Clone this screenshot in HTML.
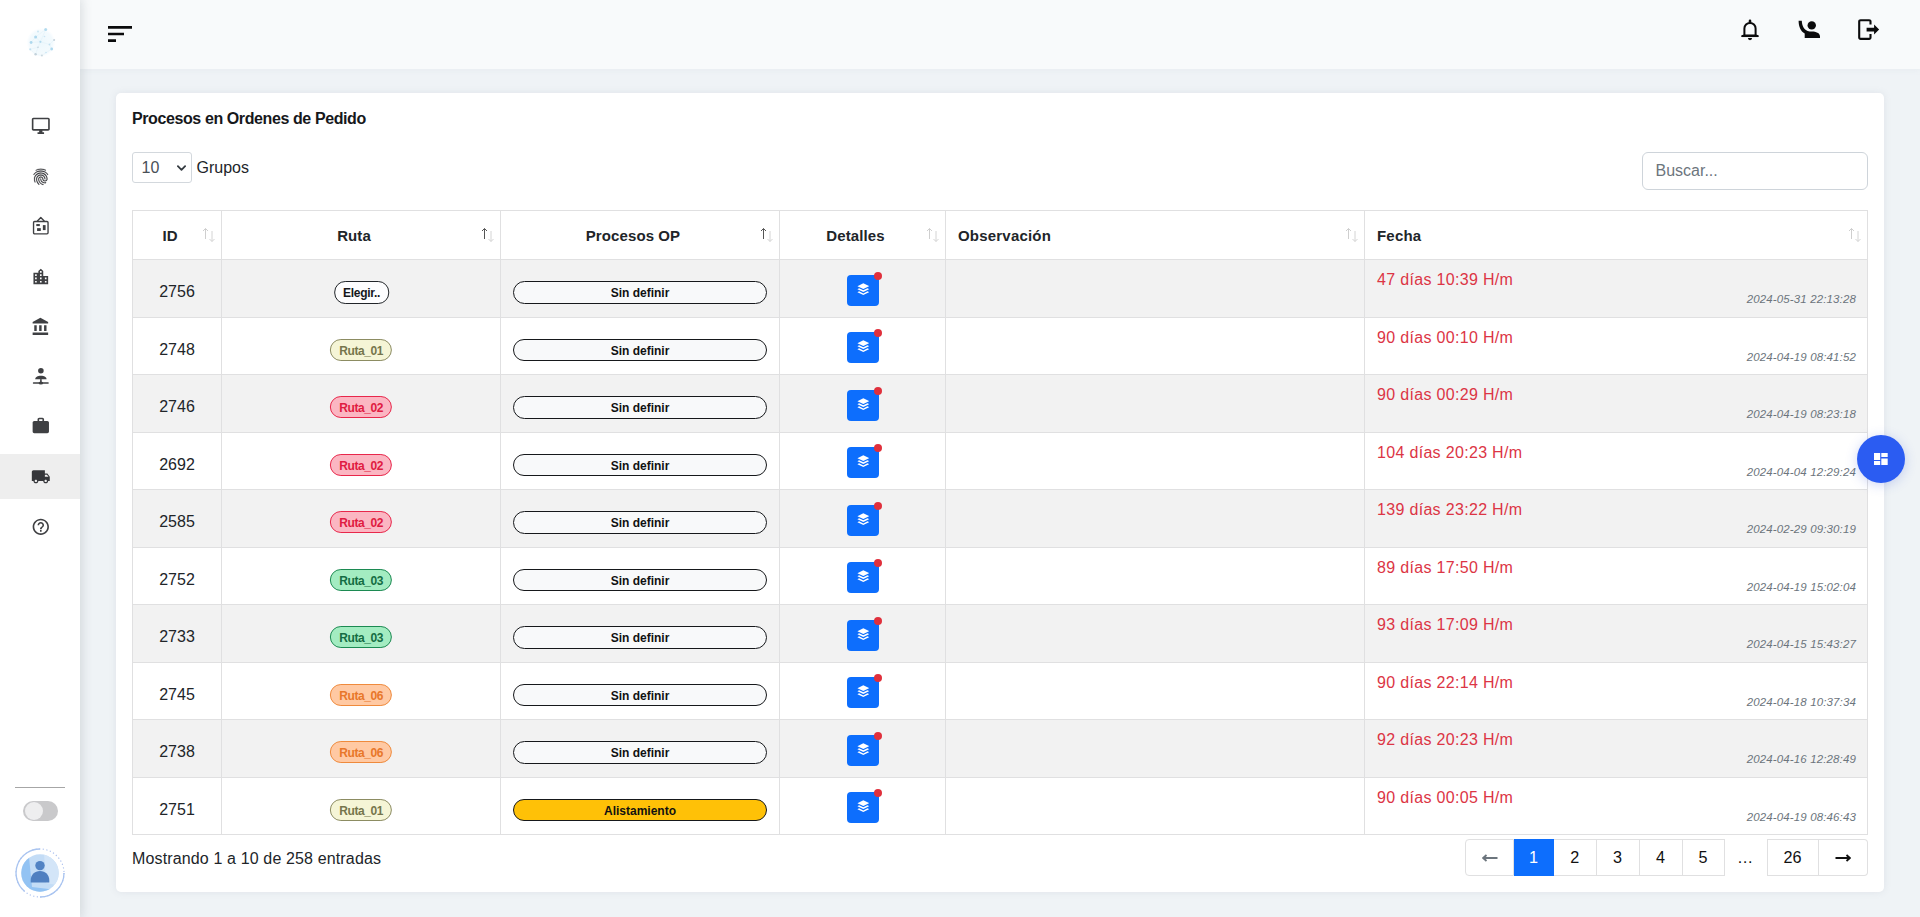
<!DOCTYPE html>
<html lang="es">
<head>
<meta charset="utf-8">
<title>Procesos en Ordenes de Pedido</title>
<style>
*{box-sizing:border-box;margin:0;padding:0}
html,body{width:1920px;height:917px;overflow:hidden}
body{position:relative;background:#eff3f6;font-family:"Liberation Sans",sans-serif;font-size:16px;color:#212529}
.sidebar{position:absolute;left:0;top:0;width:80px;height:917px;background:#fff;box-shadow:0 0 10px 2px rgba(60,72,90,.16);z-index:5}
.sidebar svg.ic{position:absolute;left:31.200px;width:19.600px;height:19.600px;fill:#3f4043;margin-top:.3px}
.sidebar .active{position:absolute;left:0;top:454px;width:80px;height:44.500px;background:#eee}
.sidebar .hr{position:absolute;left:15px;top:786.500px;width:50px;height:1px;background:#a6a6a6}
.sidebar .tog{position:absolute;left:23px;top:801px;width:35px;height:20px;border-radius:10px;background:#c9c9cb}
.sidebar .tog i{position:absolute;left:1.500px;top:1px;width:18px;height:18px;border-radius:50%;background:#eeeeef}
.sidebar .logo{position:absolute;left:25px;top:26px;width:32px;height:32px}
.sidebar .ava{position:absolute;left:14px;top:847px;width:52px;height:52px}
.topbar{position:absolute;left:80px;top:0;width:1840px;height:69px;background:#f8fafb;box-shadow:0 2px 6px rgba(120,135,155,.05)}
.topbar svg{position:absolute}
.card{position:absolute;left:116px;top:93px;width:1768px;height:799px;background:#fff;border-radius:5px;box-shadow:0 0 7px rgba(140,152,170,.16)}
.title{position:absolute;left:16px;top:16px;font-size:16px;font-weight:700;line-height:20px;letter-spacing:-.4px;color:#16181b;white-space:nowrap}
.sel{position:absolute;left:16px;top:59px;width:60px;height:31px;border:1px solid #d3d8dd;border-radius:3px;background:#fff;color:#495057;font-size:16px;line-height:29px;padding-left:8.500px}
.sel svg{position:absolute;right:5px;top:12px;width:9px}
.grp{position:absolute;left:80.500px;top:66px;line-height:18px;white-space:nowrap}
.search{position:absolute;left:1526px;top:59px;width:226px;height:38px;border:1px solid #ced4da;border-radius:6px;color:#6c757d;line-height:36px;padding-left:12.500px;background:#fff}
.tbl{position:absolute;left:16px;top:117px;width:1736px;height:625px}
.thead{position:absolute;left:0;top:0;width:1736px;height:50px;border-top:1px solid #e0e0e1;border-bottom:1px solid #e0e0e1}
.th{position:absolute;top:0;height:48px;border-left:1px solid #e0e0e1;font-weight:700;font-size:15px;line-height:48px;color:#212529;white-space:nowrap}
.th:last-child{border-right:1px solid #e0e0e1}
.th.c{text-align:center;padding:0 26px 0 12px;letter-spacing:.1px}
.th.l{text-align:left;padding-left:12px;letter-spacing:.2px}
.th span{position:relative;top:.5px}
.th .srt{position:absolute;right:5.500px;top:16px}
.tr{position:absolute;left:0;width:1736px;border-bottom:1px solid #e0e0e1}
.tr.odd{background:#f2f2f2}
.td{position:absolute;top:0;height:100%;border-left:1px solid #e0e0e1}
.td.id{left:0;width:89px;text-align:center;line-height:18px;padding-top:23px}
.td.ruta{left:89px;width:279px;text-align:center}
.td.proc{left:368px;width:279px}
.td.det{left:647px;width:166px}
.td.obs{left:813px;width:419px}
.td.fec{left:1232px;width:503px;border-right:1px solid #e0e0e1;width:504px}
.bdg{position:absolute;left:50%;top:21px;transform:translateX(-50%);height:22px;line-height:22.400px;font-size:12px;font-weight:700;letter-spacing:-.4px;border:1px solid;border-radius:11px;padding:0 8px 0 8.400px;white-space:nowrap}
.bdg.elegir{border:1.500px solid #212529;background:#fdfdfe;color:#16181b;height:23px;line-height:22.400px;letter-spacing:-.3px;padding:0 8.300px;margin-left:.5px}
.bdg.r1{border-color:#8c8c62;background:#f5f5d6;color:#75754c}
.bdg.r2{border-color:#e8274b;background:#fbb6c2;color:#e01b41}
.bdg.r3{border-color:#1c8a52;background:#a3ecc1;color:#146c43}
.bdg.r6{border-color:#ef8a3c;background:#ffc9a3;color:#e8772a}
.pb{position:absolute;left:12px;top:20.500px;width:254px;height:23.500px;border:1.500px solid #16181b;border-radius:12px;background:#f8f9fa;color:#111;font-size:12px;font-weight:700;text-align:center;line-height:22px}
.pb.al{background:#ffc107}
.btn{position:absolute;left:67px;top:15px;width:32px;height:31px;border-radius:4px;background:#0d6efd}
.btn .lay{position:absolute;left:9.700px;top:8.200px;fill:#fff}
.btn .dot{position:absolute;left:27px;top:-3px;width:8px;height:8px;border-radius:50%;background:#e0303c}
.red{position:absolute;left:12px;top:10.500px;letter-spacing:.32px;color:#dc3545;white-space:nowrap;line-height:18px}
.dt{position:absolute;right:11px;top:32px;font-size:11.500px;letter-spacing:.13px;font-style:italic;color:#6c757d;white-space:nowrap;line-height:14px}
.info{position:absolute;left:16px;top:757px;line-height:18px;white-space:nowrap;letter-spacing:.14px}
.pag{position:absolute;left:1349px;top:746px;width:403px;height:37px}
.pi{position:absolute;top:0;height:37px;border:1px solid #e0e0e1;border-left-width:0;background:#fff;text-align:center;line-height:34px;font-size:16.200px;color:#111}
.pi.prev{border-left-width:1px;border-radius:4px 0 0 4px}
.pi.next{border-radius:0 4px 4px 0}
.pi.act{background:#0d6efd;border-color:#0d6efd;color:#fff}
.pi.ell{border-color:transparent;background:transparent}
.pi.p26{border-left-width:1px}
.pi svg{position:relative;top:-1.500px}
.fab{position:absolute;left:1857px;top:435px;width:48px;height:48px;border-radius:50%;background:#2b5cf2;box-shadow:0 2px 12px rgba(60,90,220,.25);z-index:6}
.fab svg{position:absolute;left:17.300px;top:17.900px}
.tr.alt .pb{height:22.500px}
.tr.alt .btn{top:14px}

</style>
</head>
<body>
<div class="sidebar">
<svg class="logo" viewBox="25 26 32 32" opacity=".8"><defs><radialGradient id="lg"><stop offset="0" stop-color="#e3f4fc" stop-opacity=".75"/><stop offset=".8" stop-color="#e6f5fc" stop-opacity=".55"/><stop offset="1" stop-color="#eef9fe" stop-opacity="0"/></radialGradient></defs><circle cx="41" cy="42.500" r="14.500" fill="url(#lg)"/><g stroke="#bfe0f1" stroke-width=".4" opacity=".6" fill="none"><path d="M45.700 29.400 35.600 37l-4.500 5.500 9.300-.7 9.100 2.700 2.200 4.500-9.800 6.500-6.300-1.200-5.500-5 7.900-2 2.400-5.500 5.300-12.400M54.100 39.900l-4.600 4.600M35.600 37l4.800 4.800M38 47.300l-2.400 7"/></g><g fill="#86c5e6"><circle cx="45.700" cy="29.500" r="1.500" opacity=".75"/><circle cx="35.600" cy="37" r="1.500" opacity=".8"/><circle cx="31.100" cy="42.500" r="1.400" opacity=".8"/><circle cx="40.400" cy="41.800" r="1.100" opacity=".7"/><circle cx="51.700" cy="49" r="1.400" opacity=".8"/><circle cx="30.200" cy="49.300" r="1.100" opacity=".55"/><circle cx="49.500" cy="44.500" r=".9" opacity=".5"/><circle cx="38" cy="31.500" r=".9" opacity=".5"/><circle cx="44.500" cy="36.500" r=".8" opacity=".45"/><circle cx="46" cy="52.500" r=".8" opacity=".45"/></g><g fill="#8fa9b8"><circle cx="54.100" cy="39.900" r="1" opacity=".6"/><circle cx="35.600" cy="54.300" r="1.200" opacity=".6"/><circle cx="41.900" cy="55.500" r="1" opacity=".5"/><circle cx="38" cy="47.300" r=".8" opacity=".55"/></g></svg>
<div class="active"></div>
<svg class="ic" style="top:116px" viewBox="0 0 24 24"><path d="M21 2H3c-1.100 0-2 .9-2 2v12c0 1.100.9 2 2 2h7v2H8v2h8v-2h-2v-2h7c1.100 0 2-.9 2-2V4c0-1.100-.9-2-2-2zm0 14H3V4h18v12z"/></svg>
<svg class="ic" style="top:166.500px" viewBox="0 0 24 24"><path fill="#36373a" stroke="#36373a" stroke-width=".25" d="M17.810 4.470c-.08 0-.16-.02-.23-.06C15.660 3.420 14 3 12.010 3c-1.980 0-3.860.47-5.570 1.410-.24.13-.54.04-.68-.2-.13-.24-.04-.55.2-.68C7.820 2.520 9.860 2 12.010 2c2.130 0 3.990.47 6.030 1.520.25.13.34.43.21.67-.09.18-.26.28-.44.280zM3.500 9.720c-.1 0-.2-.03-.29-.09-.23-.16-.28-.47-.12-.7.990-1.400 2.250-2.500 3.750-3.270C9.980 4.040 14 4.030 17.150 5.650c1.500.77 2.760 1.860 3.750 3.250.16.220.11.540-.12.700-.23.160-.54.110-.7-.12-.9-1.260-2.040-2.250-3.390-2.940-2.870-1.470-6.540-1.470-9.400.01-1.360.7-2.500 1.700-3.400 2.960-.08.140-.23.210-.39.210zm6.250 12.070c-.13 0-.26-.05-.35-.15-.87-.87-1.340-1.430-2.010-2.640-.69-1.230-1.050-2.730-1.050-4.340 0-2.970 2.540-5.390 5.660-5.390s5.660 2.420 5.660 5.390c0 .28-.22.500-.5.500s-.5-.22-.5-.5c0-2.420-2.090-4.390-4.660-4.390-2.570 0-4.660 1.970-4.660 4.390 0 1.440.32 2.770.93 3.850.64 1.150 1.080 1.640 1.850 2.420.19.200.19.510 0 .71-.11.100-.24.150-.37.150zm7.170-1.850c-1.190 0-2.240-.3-3.100-.89-1.490-1.010-2.380-2.650-2.380-4.390 0-.28.220-.5.500-.5s.5.220.5.500c0 1.410.72 2.740 1.940 3.560.71.480 1.540.71 2.540.71.240 0 .64-.03 1.040-.1.270-.05.530.13.580.41.050.27-.13.530-.41.580-.57.110-1.070.12-1.210.120zM14.910 22c-.04 0-.09-.01-.13-.02-1.590-.44-2.630-1.030-3.720-2.100-1.400-1.390-2.170-3.240-2.170-5.220 0-1.620 1.380-2.940 3.080-2.940 1.700 0 3.080 1.320 3.080 2.940 0 1.070.93 1.940 2.080 1.940s2.080-.87 2.080-1.940c0-3.770-3.250-6.830-7.250-6.830-2.840 0-5.440 1.580-6.610 4.030-.39.810-.59 1.760-.59 2.800 0 .78.070 2.010.67 3.610.1.260-.03.550-.29.640-.26.100-.55-.04-.64-.29-.49-1.310-.73-2.610-.73-3.960 0-1.200.23-2.290.68-3.240 1.330-2.790 4.280-4.600 7.510-4.600 4.550 0 8.250 3.510 8.250 7.830 0 1.620-1.380 2.940-3.080 2.940s-3.080-1.320-3.080-2.940c0-1.070-.93-1.940-2.080-1.940s-2.080.87-2.080 1.940c0 1.710.66 3.310 1.870 4.510.95.940 1.860 1.460 3.270 1.850.27.070.42.350.35.610-.05.230-.26.380-.47.380z"/></svg>
<svg class="ic" style="top:216px;overflow:visible" viewBox="0 0 20 20"><g fill="none" stroke="#3f4043" stroke-width="1.400" stroke-linejoin="round"><rect x="2.600" y="5.600" width="14.800" height="12.600" rx="1.100"/><path d="M6.300 5.400 10 1.500l3.700 3.900"/></g><rect x="5.400" y="8.200" width="3.600" height="2.100"/><rect x="6.200" y="12.400" width="3.800" height="2.900"/><rect x="12.100" y="9.300" width="2.800" height="5.100"/></svg>
<svg class="ic" style="top:266.500px" viewBox="0 0 24 24"><path d="M15 11V5l-3-3-3 3v2H3v14h18V11h-6zm-8 8H5v-2h2v2zm0-4H5v-2h2v2zm0-4H5V9h2v2zm6 8h-2v-2h2v2zm0-4h-2v-2h2v2zm0-4h-2V9h2v2zm0-4h-2V5h2v2zm6 12h-2v-2h2v2zm0-4h-2v-2h2v2z"/></svg>
<svg class="ic" style="top:316.500px" viewBox="0 0 24 24"><path d="M4 10v7h3v-7H4zm6 0v7h3v-7h-3zM2 22h19v-3H2v3zm14-12v7h3v-7h-3zm-4.500-9L2 6v2h19V6l-9.500-5z"/></svg>
<svg class="ic" style="top:366px" viewBox="0 0 20 20"><circle cx="10.100" cy="4.900" r="2.850"/><path d="M4.300 13.600c0-2.300 2.400-3.700 5.800-3.700s5.800 1.400 5.800 3.700z"/><rect x="9.300" y="13.400" width="1.600" height="3.400"/><rect x="1.900" y="16.600" width="16.200" height="1.500" rx=".5"/><ellipse cx="10.100" cy="17.400" rx="2.300" ry="1.600"/></svg>
<svg class="ic" style="top:416.200px" viewBox="0 0 24 24"><path d="M20 6h-4V4c0-1.110-.89-2-2-2h-4c-1.110 0-2 .89-2 2v2H4c-1.110 0-1.990.89-1.990 2L2 19c0 1.110.89 2 2 2h16c1.110 0 2-.89 2-2V8c0-1.110-.89-2-2-2zm-6 0h-4V4h4v2z"/></svg>
<svg class="ic" style="top:466.900px" viewBox="0 0 24 24"><path fill="#35363a" d="M20 8h-3V4H3c-1.100 0-2 .9-2 2v11h2c0 1.660 1.340 3 3 3s3-1.340 3-3h6c0 1.660 1.340 3 3 3s3-1.340 3-3h2v-5l-3-4zM6 18.500c-.83 0-1.500-.67-1.500-1.500s.67-1.500 1.500-1.500 1.500.67 1.500 1.500-.67 1.500-1.500 1.500zm13.500-9l1.960 2.500H17V9.500h2.500zm-1.500 9c-.83 0-1.500-.67-1.500-1.500s.67-1.500 1.500-1.500 1.500.67 1.500 1.500-.67 1.500-1.500 1.500z"/></svg>
<svg class="ic" style="top:516.300px" viewBox="0 0 24 24"><path d="M11 18h2v-2h-2v2zm1-16C6.480 2 2 6.480 2 12s4.480 10 10 10 10-4.480 10-10S17.520 2 12 2zm0 18c-4.410 0-8-3.590-8-8s3.590-8 8-8 8 3.590 8 8-3.590 8-8 8zm0-14c-2.210 0-4 1.790-4 4h2c0-1.100.9-2 2-2s2 .9 2 2c0 2-3 1.750-3 5h2c0-2.250 3-2.500 3-5 0-2.210-1.790-4-4-4z"/></svg>
<div class="hr"></div>
<div class="tog"><i></i></div>
<svg class="ava" viewBox="0 0 52 52"><defs><clipPath id="avc"><circle cx="26" cy="26" r="18.700"/></clipPath></defs>
<circle cx="26" cy="26" r="24" fill="none" stroke="#a9bfee" stroke-width="1.100" stroke-dasharray="1.200 2.400"/>
<path d="M10.500 44.300A24 24 0 0 1 26 2" fill="none" stroke="#a9c4f0" stroke-width="1.300"/>
<path d="M50 26A24 24 0 0 1 26 50" fill="none" stroke="#a9c4f0" stroke-width="1.300"/>
<g clip-path="url(#avc)"><rect width="52" height="52" fill="#c3dcf6"/><path d="M0 0h14l4 40 34 4v8H0z" fill="#93c3f3"/><path d="M30 6h22v34l-20-4z" fill="#d3e5f8"/>
<circle cx="26" cy="18.600" r="4.700" fill="#5283c4"/><path d="M16.700 35.600v-2c0-6 4-9.600 9.300-9.600s9.300 3.600 9.300 9.600v2z" fill="#4f7fc0"/></g></svg>
</div>
<div class="topbar">
<svg style="left:24px;top:18px" width="32" height="32" viewBox="0 0 24 24"><path fill="#0b0b0c" d="M3 18h6v-2H3v2zM3 6v2h18V6H3zm0 7h12v-2H3v2z"/></svg>
<svg style="left:1658px;top:17px;overflow:visible" width="24" height="26" viewBox="0 0 24 26"><g fill="none" stroke="#0b0b0c"><path d="M6.400 18.900V11.500a5.600 5.600 0 0 1 11.200 0v7.400" stroke-width="2"/><path d="M3.500 19h17" stroke-width="2.100"/><path d="M12 3.900v1.500" stroke-width="2.600" stroke-linecap="round"/></g><path fill="#0b0b0c" d="M3.100 19.900l2.600-2.500h12.600l2.600 2.500z"/><path fill="#0b0b0c" d="M9.900 21.100h4.200a2.100 2.100 0 0 1-4.200 0z"/></svg>
<svg style="left:1716px;top:18px;overflow:visible" width="26" height="22" viewBox="0 0 26 22"><circle cx="15.750" cy="7.400" r="4.200" fill="#0b0b0c"/><path fill="#0b0b0c" d="M8.700 19.900v-4.300C4.600 13.200 2.700 8.800 2.600 2.800h3.200c.1 5 2.300 8.800 5.800 10.200 1.300.5 2.700.5 4.200.5 4.200 0 8.200 1.400 8.200 5v1.400z"/></svg>
<svg style="left:1776px;top:17px;overflow:visible" width="26" height="26" viewBox="0 0 26 26"><path fill="none" stroke="#0b0b0c" stroke-width="2.100" stroke-linejoin="round" d="M14.500 7.600V4.600a1.400 1.400 0 0 0-1.400-1.400H4.600a1.400 1.400 0 0 0-1.400 1.400v15.900a1.400 1.400 0 0 0 1.400 1.400h8.500a1.400 1.400 0 0 0 1.400-1.400v-3.500"/><path fill="#0b0b0c" d="M10.600 10.700h7.500V7.600l5 5-5 5v-3.100h-7.500z"/></svg>
</div>
<div class="card">
<h6 class="title">Procesos en Ordenes de Pedido</h6>
<div class="sel"><span>10</span><svg viewBox="0 0 10 6" width="10" height="6"><path d="M1 1l4 4 4-4" fill="none" stroke="#343a40" stroke-width="2" stroke-linecap="round" stroke-linejoin="round"/></svg></div><div class="grp">Grupos</div>
<div class="search">Buscar...</div>
<div class="tbl">
<div class="thead">
<div class="th c" style="left:0px;width:89px"><span>ID</span><svg class="srt" viewBox="0 0 14 16" width="14" height="16"><path d="M3.500 12V1.500M1 4l2.500-2.500L6 4" fill="none" stroke="#cfcfcf" stroke-width="1"/><path d="M10 4v10.500M7.500 12l2.500 2.500 2.500-2.500" fill="none" stroke="#d4d4d4" stroke-width="1"/></svg></div>
<div class="th c" style="left:89px;width:279px"><span>Ruta</span><svg class="srt" viewBox="0 0 14 16" width="14" height="16"><path d="M3.500 12V1.500M1 4l2.500-2.500L6 4" fill="none" stroke="#555" stroke-width="1"/><path d="M10 4v10.500M7.500 12l2.500 2.500 2.500-2.500" fill="none" stroke="#d4d4d4" stroke-width="1"/></svg></div>
<div class="th c" style="left:368px;width:279px"><span>Procesos OP</span><svg class="srt" viewBox="0 0 14 16" width="14" height="16"><path d="M3.500 12V1.500M1 4l2.500-2.500L6 4" fill="none" stroke="#555" stroke-width="1"/><path d="M10 4v10.500M7.500 12l2.500 2.500 2.500-2.500" fill="none" stroke="#d4d4d4" stroke-width="1"/></svg></div>
<div class="th c" style="left:647px;width:166px"><span>Detalles</span><svg class="srt" viewBox="0 0 14 16" width="14" height="16"><path d="M3.500 12V1.500M1 4l2.500-2.500L6 4" fill="none" stroke="#cfcfcf" stroke-width="1"/><path d="M10 4v10.500M7.500 12l2.500 2.500 2.500-2.500" fill="none" stroke="#d4d4d4" stroke-width="1"/></svg></div>
<div class="th l" style="left:813px;width:419px"><span>Observación</span><svg class="srt" viewBox="0 0 14 16" width="14" height="16"><path d="M3.500 12V1.500M1 4l2.500-2.500L6 4" fill="none" stroke="#cfcfcf" stroke-width="1"/><path d="M10 4v10.500M7.500 12l2.500 2.500 2.500-2.500" fill="none" stroke="#d4d4d4" stroke-width="1"/></svg></div>
<div class="th l" style="left:1232px;width:504px"><span>Fecha</span><svg class="srt" viewBox="0 0 14 16" width="14" height="16"><path d="M3.500 12V1.500M1 4l2.500-2.500L6 4" fill="none" stroke="#cfcfcf" stroke-width="1"/><path d="M10 4v10.500M7.500 12l2.500 2.500 2.500-2.500" fill="none" stroke="#d4d4d4" stroke-width="1"/></svg></div>
</div>
<div class="tr odd" style="top:50px;height:58px"><div class="td id">2756</div><div class="td ruta"><span class="bdg elegir">Elegir..</span></div><div class="td proc"><span class="pb sd">Sin definir</span></div><div class="td det"><span class="btn"><svg class="lay" viewBox="0 0 12 12" width="12.600" height="12.600"><path d="M6 .3 11.6 3 6 5.7.4 3z"/><path d="M6 7 2 5.05.4 5.85 6 8.6l5.600-2.750L10 5.050z"/><path d="M6 9.900 2 7.950.4 8.750 6 11.500l5.600-2.750L10 7.950z"/></svg><i class="dot"></i></span></div><div class="td obs"></div><div class="td fec"><span class="red">47 días 10:39 H/m</span><span class="dt">2024-05-31 22:13:28</span></div></div>
<div class="tr alt" style="top:108px;height:57px"><div class="td id">2748</div><div class="td ruta"><span class="bdg r1">Ruta_01</span></div><div class="td proc"><span class="pb sd">Sin definir</span></div><div class="td det"><span class="btn"><svg class="lay" viewBox="0 0 12 12" width="12.600" height="12.600"><path d="M6 .3 11.6 3 6 5.7.4 3z"/><path d="M6 7 2 5.05.4 5.85 6 8.6l5.600-2.750L10 5.050z"/><path d="M6 9.900 2 7.950.4 8.750 6 11.500l5.600-2.750L10 7.950z"/></svg><i class="dot"></i></span></div><div class="td obs"></div><div class="td fec"><span class="red">90 días 00:10 H/m</span><span class="dt">2024-04-19 08:41:52</span></div></div>
<div class="tr odd" style="top:165px;height:58px"><div class="td id">2746</div><div class="td ruta"><span class="bdg r2">Ruta_02</span></div><div class="td proc"><span class="pb sd">Sin definir</span></div><div class="td det"><span class="btn"><svg class="lay" viewBox="0 0 12 12" width="12.600" height="12.600"><path d="M6 .3 11.6 3 6 5.7.4 3z"/><path d="M6 7 2 5.05.4 5.85 6 8.6l5.600-2.750L10 5.050z"/><path d="M6 9.900 2 7.950.4 8.750 6 11.500l5.600-2.750L10 7.950z"/></svg><i class="dot"></i></span></div><div class="td obs"></div><div class="td fec"><span class="red">90 días 00:29 H/m</span><span class="dt">2024-04-19 08:23:18</span></div></div>
<div class="tr alt" style="top:223px;height:57px"><div class="td id">2692</div><div class="td ruta"><span class="bdg r2">Ruta_02</span></div><div class="td proc"><span class="pb sd">Sin definir</span></div><div class="td det"><span class="btn"><svg class="lay" viewBox="0 0 12 12" width="12.600" height="12.600"><path d="M6 .3 11.6 3 6 5.7.4 3z"/><path d="M6 7 2 5.05.4 5.85 6 8.6l5.600-2.750L10 5.050z"/><path d="M6 9.900 2 7.950.4 8.750 6 11.500l5.600-2.750L10 7.950z"/></svg><i class="dot"></i></span></div><div class="td obs"></div><div class="td fec"><span class="red">104 días 20:23 H/m</span><span class="dt">2024-04-04 12:29:24</span></div></div>
<div class="tr odd" style="top:280px;height:58px"><div class="td id">2585</div><div class="td ruta"><span class="bdg r2">Ruta_02</span></div><div class="td proc"><span class="pb sd">Sin definir</span></div><div class="td det"><span class="btn"><svg class="lay" viewBox="0 0 12 12" width="12.600" height="12.600"><path d="M6 .3 11.6 3 6 5.7.4 3z"/><path d="M6 7 2 5.05.4 5.85 6 8.6l5.600-2.750L10 5.050z"/><path d="M6 9.900 2 7.950.4 8.750 6 11.500l5.600-2.750L10 7.950z"/></svg><i class="dot"></i></span></div><div class="td obs"></div><div class="td fec"><span class="red">139 días 23:22 H/m</span><span class="dt">2024-02-29 09:30:19</span></div></div>
<div class="tr alt" style="top:338px;height:57px"><div class="td id">2752</div><div class="td ruta"><span class="bdg r3">Ruta_03</span></div><div class="td proc"><span class="pb sd">Sin definir</span></div><div class="td det"><span class="btn"><svg class="lay" viewBox="0 0 12 12" width="12.600" height="12.600"><path d="M6 .3 11.6 3 6 5.7.4 3z"/><path d="M6 7 2 5.05.4 5.85 6 8.6l5.600-2.750L10 5.050z"/><path d="M6 9.900 2 7.950.4 8.750 6 11.500l5.600-2.750L10 7.950z"/></svg><i class="dot"></i></span></div><div class="td obs"></div><div class="td fec"><span class="red">89 días 17:50 H/m</span><span class="dt">2024-04-19 15:02:04</span></div></div>
<div class="tr odd" style="top:395px;height:58px"><div class="td id">2733</div><div class="td ruta"><span class="bdg r3">Ruta_03</span></div><div class="td proc"><span class="pb sd">Sin definir</span></div><div class="td det"><span class="btn"><svg class="lay" viewBox="0 0 12 12" width="12.600" height="12.600"><path d="M6 .3 11.6 3 6 5.7.4 3z"/><path d="M6 7 2 5.05.4 5.85 6 8.6l5.600-2.750L10 5.050z"/><path d="M6 9.900 2 7.950.4 8.750 6 11.500l5.600-2.750L10 7.950z"/></svg><i class="dot"></i></span></div><div class="td obs"></div><div class="td fec"><span class="red">93 días 17:09 H/m</span><span class="dt">2024-04-15 15:43:27</span></div></div>
<div class="tr alt" style="top:453px;height:57px"><div class="td id">2745</div><div class="td ruta"><span class="bdg r6">Ruta_06</span></div><div class="td proc"><span class="pb sd">Sin definir</span></div><div class="td det"><span class="btn"><svg class="lay" viewBox="0 0 12 12" width="12.600" height="12.600"><path d="M6 .3 11.6 3 6 5.7.4 3z"/><path d="M6 7 2 5.05.4 5.85 6 8.6l5.600-2.750L10 5.050z"/><path d="M6 9.900 2 7.950.4 8.750 6 11.500l5.600-2.750L10 7.950z"/></svg><i class="dot"></i></span></div><div class="td obs"></div><div class="td fec"><span class="red">90 días 22:14 H/m</span><span class="dt">2024-04-18 10:37:34</span></div></div>
<div class="tr odd" style="top:510px;height:58px"><div class="td id">2738</div><div class="td ruta"><span class="bdg r6">Ruta_06</span></div><div class="td proc"><span class="pb sd">Sin definir</span></div><div class="td det"><span class="btn"><svg class="lay" viewBox="0 0 12 12" width="12.600" height="12.600"><path d="M6 .3 11.6 3 6 5.7.4 3z"/><path d="M6 7 2 5.05.4 5.85 6 8.6l5.600-2.750L10 5.050z"/><path d="M6 9.900 2 7.950.4 8.750 6 11.500l5.600-2.750L10 7.950z"/></svg><i class="dot"></i></span></div><div class="td obs"></div><div class="td fec"><span class="red">92 días 20:23 H/m</span><span class="dt">2024-04-16 12:28:49</span></div></div>
<div class="tr alt" style="top:568px;height:57px"><div class="td id">2751</div><div class="td ruta"><span class="bdg r1">Ruta_01</span></div><div class="td proc"><span class="pb al">Alistamiento</span></div><div class="td det"><span class="btn"><svg class="lay" viewBox="0 0 12 12" width="12.600" height="12.600"><path d="M6 .3 11.6 3 6 5.7.4 3z"/><path d="M6 7 2 5.05.4 5.85 6 8.6l5.600-2.750L10 5.050z"/><path d="M6 9.900 2 7.950.4 8.750 6 11.500l5.600-2.750L10 7.950z"/></svg><i class="dot"></i></span></div><div class="td obs"></div><div class="td fec"><span class="red">90 días 00:05 H/m</span><span class="dt">2024-04-19 08:46:43</span></div></div>
</div>
<div class="info">Mostrando 1 a 10 de 258 entradas</div>
<div class="pag"><div class="pi prev" style="left:0px;width:49px"><svg viewBox="0 0 16 8" width="16" height="8"><path d="M15.500 4H2M4.500 1 1.200 4l3.300 3" fill="none" stroke="#6c757d" stroke-width="1.800"/></svg></div><div class="pi act" style="left:49px;width:40px">1</div><div class="pi " style="left:89px;width:42.5px">2</div><div class="pi " style="left:131.5px;width:43.0px">3</div><div class="pi " style="left:174.5px;width:43.0px">4</div><div class="pi last5" style="left:217.5px;width:42.0px">5</div><div class="pi ell" style="left:259.5px;width:42.0px">…</div><div class="pi p26" style="left:301.5px;width:52.0px">26</div><div class="pi next" style="left:353.5px;width:49.0px"><svg viewBox="0 0 16 8" width="16" height="8"><path d="M.5 4H14M11.500 1l3.300 3-3.300 3" fill="none" stroke="#111" stroke-width="1.800"/></svg></div></div>
</div>
<div class="fab"><svg viewBox="0 0 14 12" width="14" height="12"><path fill="#fff" d="M0 0h6.200v6.900H0zM0 8.100h6.200V12H0zM7.300 0h6.400v4.100H7.300zM7.300 5.400h6.400V12H7.300z"/></svg></div>
</body>
</html>
